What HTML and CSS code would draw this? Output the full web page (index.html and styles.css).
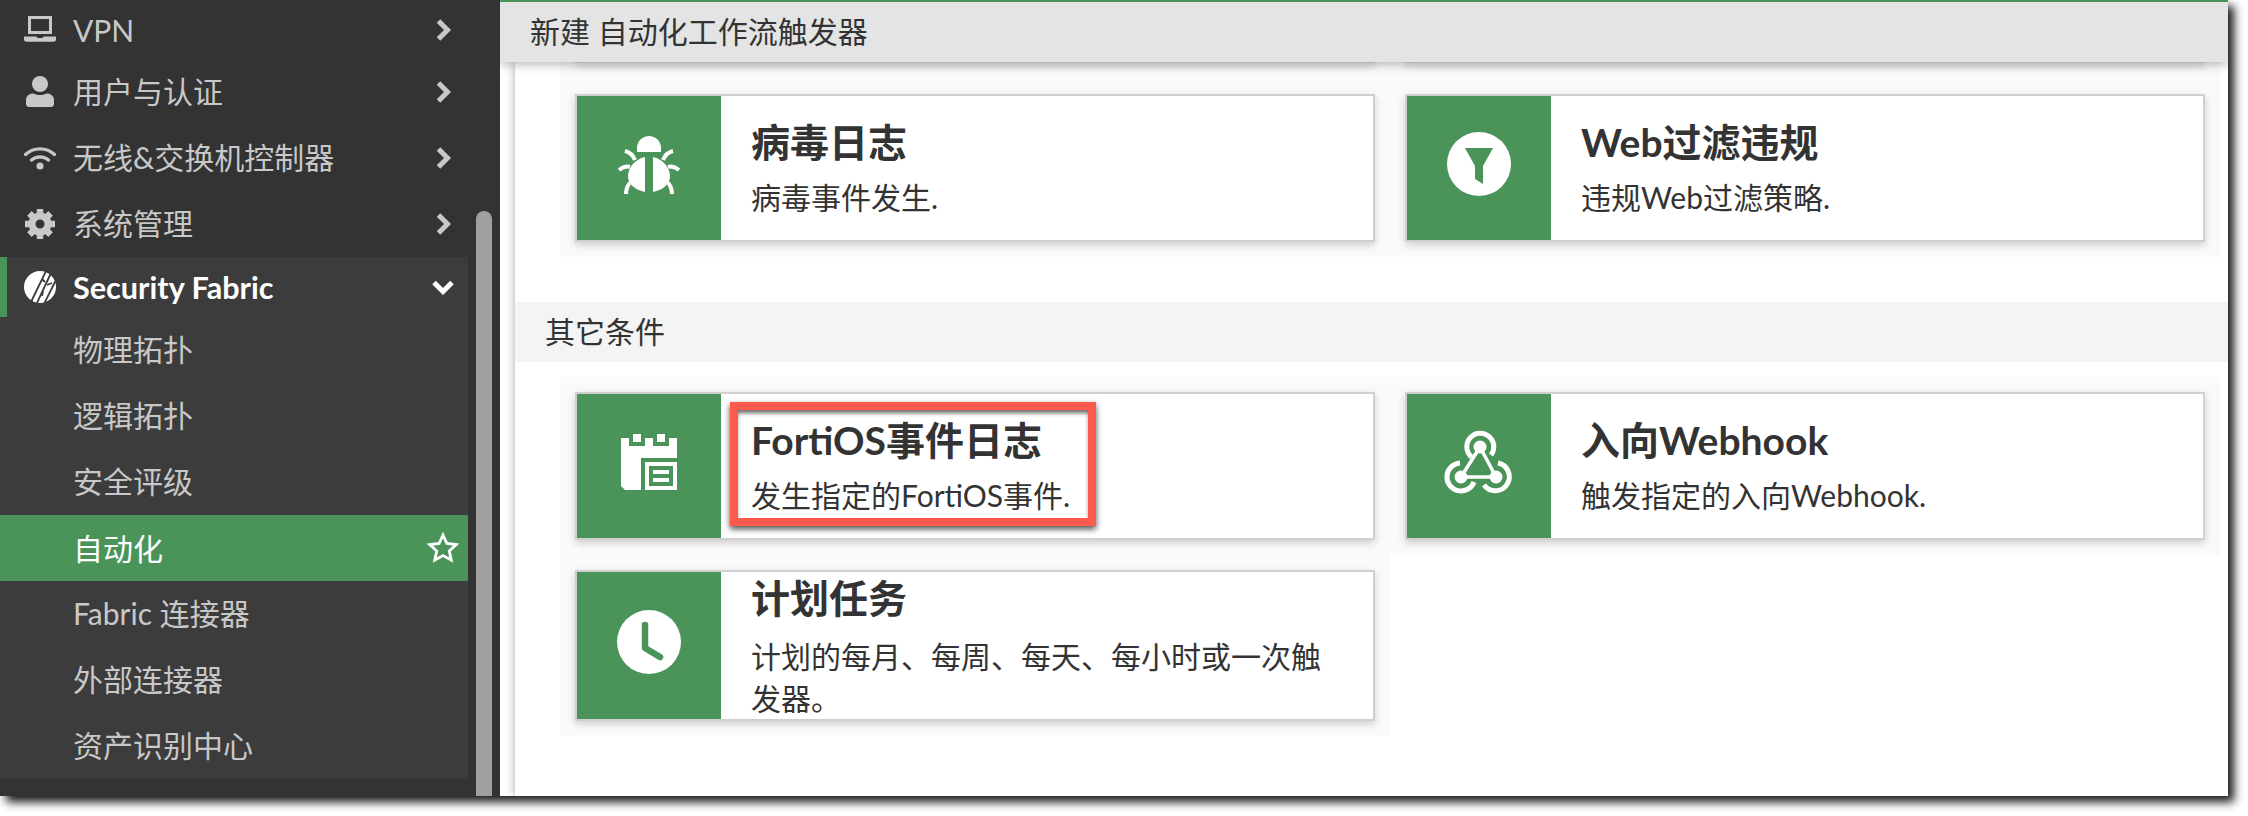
FILE: index.html
```html
<!DOCTYPE html>
<html lang="zh-CN">
<head>
  <meta charset="UTF-8">
  <title>新建 自动化工作流触发器</title>
  <link rel="stylesheet" href="styles.css">
</head>
<body>

  <div class="window">

    <aside class="sidebar">
      <nav class="nav">
        <div class="nav-item">
          <svg class="nav-icon" viewBox="0 0 32 32"><path d="M5.500 3.500h21v15h-21z" fill="none" stroke="currentColor" stroke-width="3"/><path d="M0 22.500h12.500l1 1.500h5l1-1.500H32V25a2.500 2.500 0 0 1-2.500 2.800h-27A2.500 2.500 0 0 1 0 25z" fill="currentColor"/></svg>
          <span class="nav-label nav-label-latin">VPN</span>
          <svg class="chevron" viewBox="0 0 24 24"><path d="M7.500 3l9 9-9 9"/></svg>
        </div>
        <div class="nav-item">
          <svg class="nav-icon" viewBox="0 0 32 32"><circle cx="16" cy="8" r="8" fill="currentColor"/><path d="M2 28v-4c0-4 3.500-6.500 7-6.500 2 .8 4.500 1.500 7 1.500s5-.7 7-1.500c3.500 0 7 2.500 7 6.500v4c0 2-1.500 3-3 3H5c-1.500 0-3-1-3-3z" fill="currentColor"/></svg>
          <span class="nav-label">用户与认证</span>
          <svg class="chevron" viewBox="0 0 24 24"><path d="M7.500 3l9 9-9 9"/></svg>
        </div>
        <div class="nav-item">
          <svg class="nav-icon" viewBox="0 0 32 32"><path d="M1.500 12.500c8-7.500 21-7.500 29 0M7.500 18c4.800-4.300 12.200-4.300 17 0" fill="none" stroke="currentColor" stroke-width="3.200" stroke-linecap="round"/><circle cx="16" cy="24" r="3.500" fill="currentColor"/></svg>
          <span class="nav-label">无线&amp;交换机控制器</span>
          <svg class="chevron" viewBox="0 0 24 24"><path d="M7.500 3l9 9-9 9"/></svg>
        </div>
        <div class="nav-item">
          <svg class="nav-icon" viewBox="0 0 32 32"><circle cx="16" cy="16" r="8" fill="none" stroke="currentColor" stroke-width="7"/><path d="M16 6V1M16 26v5M6 16H1M26 16h5M8.900 8.900L5.400 5.400M23.100 23.100l3.500 3.500M23.100 8.900l3.500-3.500M8.900 23.100l-3.500 3.500" stroke="currentColor" stroke-width="6.500"/></svg>
          <span class="nav-label">系统管理</span>
          <svg class="chevron" viewBox="0 0 24 24"><path d="M7.500 3l9 9-9 9"/></svg>
        </div>

        <div class="nav-group">
          <div class="nav-group-head">
            <svg class="nav-icon" viewBox="0 0 32 32">
              <circle cx="16" cy="16" r="16" fill="#fff"/>
              <g stroke="#3c3c3c" stroke-width="1.800" fill="none">
                <path d="M22 0L7 31M27 2L13 32M32 9L20 33"/>
                <path d="M18 8l3 3M23 14l5-2M19 20l-1 5"/>
              </g>
            </svg>
            <span class="nav-label nav-label-latin">Security Fabric</span>
            <svg class="chevron chevron-open" viewBox="0 0 24 24"><path d="M3 7.500l9 9 9-9"/></svg>
          </div>
          <div class="nav-sub">物理拓扑</div>
          <div class="nav-sub">逻辑拓扑</div>
          <div class="nav-sub">安全评级</div>
          <div class="nav-sub nav-sub-active">
            <span class="nav-label">自动化</span>
            <svg class="star" viewBox="0 0 32 32"><path d="M16 3l3.900 8.500 9.300 1.100-6.900 6.300 1.900 9.200L16 23.500l-8.200 4.600 1.900-9.200-6.900-6.300 9.300-1.100z"/></svg>
          </div>
          <div class="nav-sub">Fabric 连接器</div>
          <div class="nav-sub">外部连接器</div>
          <div class="nav-sub">资产识别中心</div>
        </div>
      </nav>
      <div class="scrollbar"></div>
    </aside>

    <main class="main">
      <header class="top-title">新建 自动化工作流触发器</header>

      <div class="panel">
        <div class="tile-grid">
          <div class="tile-cell tile-cell-cut"><div class="tile-stub"></div></div>
          <div class="tile-cell tile-cell-cut"><div class="tile-stub"></div></div>

          <div class="tile-cell">
            <div class="tile">
              <div class="tile-icon">
                <svg class="tile-svg" viewBox="0 -4 64 64">
                  <path d="M20 16v-4a12 12 0 0 1 24 0v4z" fill="#fff"/>
                  <path d="M28 21C18 23 11 32 11 40s7 14 17 16z" fill="#fff"/>
                  <path d="M36 21c10 2 17 11 17 19s-7 14-17 16z" fill="#fff"/>
                  <g fill="none" stroke="#fff" stroke-width="4">
                    <path d="M8 15c4 1 8 4 10 9M2 34c4-3 8-4 11-3M9 58c0-6 2-10 6-13"/>
                    <path d="M56 15c-4 1-8 4-10 9M62 34c-4-3-8-4-11-3M55 58c0-6-2-10-6-13"/>
                  </g>
                </svg>
              </div>
              <div class="tile-text">
                <div class="tile-name">病毒日志</div>
                <div class="tile-desc">病毒事件发生.</div>
              </div>
            </div>
          </div>

          <div class="tile-cell">
            <div class="tile">
              <div class="tile-icon">
                <svg class="tile-svg" viewBox="0 0 64 64">
                  <circle cx="32" cy="32" r="32" fill="#fff"/>
                  <path d="M18 16h28L36 34v18l-8-5V34z" fill="#4a9359"/>
                </svg>
              </div>
              <div class="tile-text">
                <div class="tile-name">Web过滤违规</div>
                <div class="tile-desc">违规Web过滤策略.</div>
              </div>
            </div>
          </div>
        </div>

        <h3 class="section-title">其它条件</h3>

        <div class="tile-grid">
          <div class="tile-cell">
            <div class="tile">
              <div class="tile-icon">
                <svg class="tile-svg" viewBox="-4 -4 64 64">
                  <path d="M12 0h8v8h-8zM36 0h8v8h-8z" fill="#fff"/>
                  <path d="M0 4h8v8h16V4h8v8h16V4h8v20H20v32H4l-4-4z" fill="#fff"/>
                  <path d="M24 28h32v28H24zM28 32v20h24V32zM32 36h16v4H32zM32 44h16v4H32z" fill="#fff" fill-rule="evenodd"/>
                </svg>
              </div>
              <div class="tile-text">
                <div class="tile-name">FortiOS事件日志</div>
                <div class="tile-desc">发生指定的FortiOS事件.</div>
              </div>
              <div class="callout"></div>
            </div>
          </div>

          <div class="tile-cell">
            <div class="tile">
              <div class="tile-icon">
                <svg class="tile-svg" viewBox="17 5 64 64">
                  <g fill="#fff">
                    <circle cx="50" cy="22" r="6.500"/>
                    <circle cx="31" cy="52" r="6.500"/>
                    <circle cx="66" cy="52" r="6.500"/>
                  </g>
                  <g fill="none" stroke="#fff">
                    <path d="M50 22L31 52H66L50 22" stroke-width="3.500"/>
                    <path d="M41.500 32A13.500 13.500 0 1 1 61 30" stroke-width="5"/>
                    <path d="M30 38A14 14 0 1 0 44 57" stroke-width="5"/>
                    <path d="M54 60A14 14 0 1 0 68 38" stroke-width="5"/>
                  </g>
                </svg>
              </div>
              <div class="tile-text">
                <div class="tile-name">入向Webhook</div>
                <div class="tile-desc">触发指定的入向Webhook.</div>
              </div>
            </div>
          </div>

          <div class="tile-cell">
            <div class="tile tile-tall">
              <div class="tile-icon">
                <svg class="tile-svg" viewBox="0 0 64 64">
                  <circle cx="32" cy="32" r="32" fill="#fff"/>
                  <path d="M28 15v23l15 9" fill="none" stroke="#4a9359" stroke-width="6.500" stroke-linecap="round" stroke-linejoin="round"/>
                </svg>
              </div>
              <div class="tile-text">
                <div class="tile-name">计划任务</div>
                <div class="tile-desc">计划的每月、每周、每天、每小时或一次触发器。</div>
              </div>
            </div>
          </div>

          <div class="tile-empty"></div>
        </div>
      </div>
    </main>

  </div>

</body>
</html>
```

FILE: styles.css
```css
html, body {
  margin: 0;
  height: 100%;
  background-color: #fff;
  overflow: hidden;
}

body {
  font-family: Lato, "Noto Sans CJK SC", sans-serif;
  font-size: 30px;
  color: #333;
}

.window {
  display: flex;
  width: 2228px;
  height: 796px;
  background-color: #fff;
  box-shadow: 6px 6px 9px rgba(0, 0, 0, 0.9);
}

/* sidebar */

.sidebar {
  position: relative;
  flex: 0 0 500px;
  background-color: #333;
  color: #c8c8c8;
  overflow: hidden;
}

.nav {
  width: 468px;
}

.nav-item,
.nav-group-head,
.nav-sub {
  display: flex;
  align-items: center;
  box-sizing: border-box;
  height: 66px;
}

.nav-item {
  padding-left: 24px;
}

.nav-item:first-child {
  height: 59px;
}

.nav-icon {
  flex: 0 0 32px;
  width: 32px;
  height: 32px;
  margin-right: 17px;
}

.nav-label {
  flex: 1;
  padding-bottom: 5px;
}

.nav-label-latin {
  padding-bottom: 0;
}

.chevron {
  flex: 0 0 24px;
  width: 24px;
  height: 24px;
  margin-right: 13px;
  fill: none;
  stroke: currentColor;
  stroke-width: 5;
}

.nav-group {
  background-color: #3c3c3c;
  height: 522px;
}

.nav-group-head {
  height: 60px;
  padding-left: 17px;
  border-left: 7px solid #4a9359;
  color: #fff;
  font-size: 30.600px;
  font-weight: 700;
}

.nav-sub {
  padding-left: 73px;
  padding-bottom: 5px;
}

.nav-sub-active {
  padding-bottom: 0;
  background-color: #4a9359;
  color: #fff;
}

.nav-sub-active .nav-label {
  padding-bottom: 3px;
}

.star {
  width: 32px;
  height: 32px;
  margin-right: 9px;
  fill: none;
  stroke: #fff;
  stroke-width: 2.800;
}

.scrollbar {
  position: absolute;
  top: 211px;
  right: 8px;
  bottom: 0;
  width: 16px;
  border-radius: 8px 8px 0 0;
  background-color: #a0a0a0;
}

/* main area */

.main {
  display: flex;
  flex-direction: column;
  flex: 1;
  min-width: 0;
  overflow: hidden;
}

.top-title {
  position: relative;
  z-index: 2;
  flex: 0 0 60px;
  border-top: 2px solid #4a9359;
  padding-left: 30px;
  background-color: #e4e4e4;
  line-height: 58px;
  box-shadow: 0 2px 10px rgba(0, 0, 0, 0.3);
}

.panel {
  flex: 1;
  margin-left: 15px;
  background-color: #fff;
  box-shadow: 0 0 9px rgba(0, 0, 0, 0.35);
}

.tile-grid {
  display: grid;
  grid-template-columns: 830px 830px;
  margin-left: 45px;
}

.tile-cell {
  padding: 15px;
  background-color: #fafafa;
}

.tile-cell-cut {
  height: 2px;
  padding-top: 0;
}

.tile-stub {
  height: 1px;
  background-color: #ddd;
  box-shadow: 0 2px 7px rgba(0, 0, 0, 0.65);
}

.tile-empty {
  background-color: #fff;
}

.tile {
  position: relative;
  display: flex;
  min-height: 144px;
  border: 2px solid #d0d0d0;
  background-color: #fff;
  box-shadow: 0 3px 8px rgba(0, 0, 0, 0.18);
}

.tile-tall {
  min-height: 147px;
}

.tile-icon {
  display: flex;
  align-items: center;
  justify-content: center;
  flex: 0 0 144px;
  background-color: #4a9359;
}

.tile-svg {
  width: 64px;
  height: 64px;
  margin-bottom: 8px;
  overflow: visible;
}

.tile-text {
  flex: 1;
  align-self: center;
  margin-top: -6px;
  padding: 0 31px 0 30px;
}

.tile-name {
  padding-top: 2px;
  font-size: 39px;
  font-weight: 700;
  line-height: 54px;
  margin-bottom: 7px;
}

.tile-desc {
  line-height: 42px;
}

.tile-tall .tile-text {
  margin-top: -3px;
}

.tile-tall .tile-name {
  margin-bottom: 10px;
}

.section-title {
  height: 60px;
  margin: 45px 0 15px;
  padding-left: 30px;
  background-color: #f4f4f4;
  font-size: 30px;
  font-weight: 400;
  line-height: 58px;
}

/* red box drawn over the screenshot */
.callout {
  position: absolute;
  top: 8px;
  left: 153px;
  box-sizing: border-box;
  width: 366px;
  height: 124px;
  border: 8px solid #fd5a4e;
  box-shadow: 0 3px 6px rgba(0, 0, 0, 0.7), inset 0 4px 4px -1px rgba(0, 0, 0, 0.6);
}
```
